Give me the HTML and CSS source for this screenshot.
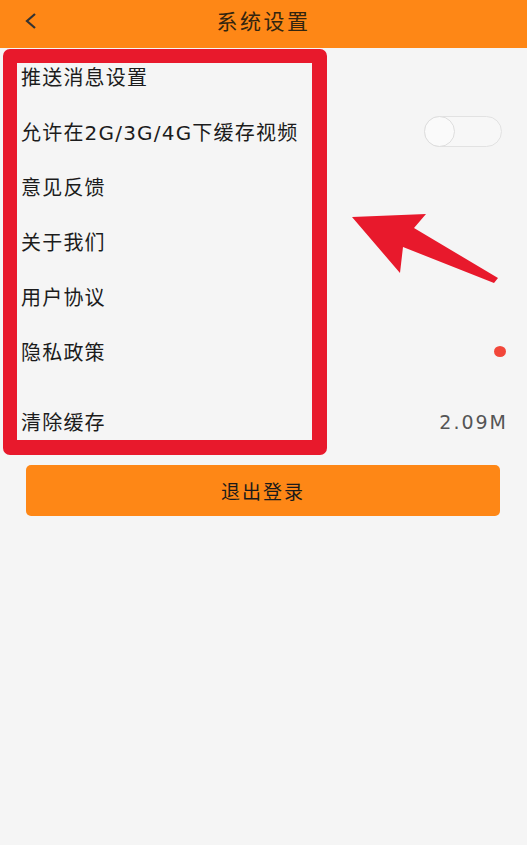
FILE: index.html
```html
<!DOCTYPE html>
<html lang="zh-CN">
<head>
    <meta charset="UTF-8">
    <title>系统设置</title>
    <link rel="stylesheet" href="styles.css">
</head>
<body>
<div class="page">
    <div class="header">
        <svg class="back" width="16" height="20" viewBox="0 0 16 20">
            <polyline points="12,3 4,10 12,17" fill="none" stroke="#333" stroke-width="2.2"/>
        </svg>
        <span class="title">系统设置</span>
    </div>

    <div class="list">
        <div class="row"><span class="label">推送消息设置</span></div>
        <div class="row">
            <span class="label">允许在2G/3G/4G下缓存视频</span>
            <span class="switch"><span class="knob"></span></span>
        </div>
        <div class="row"><span class="label">意见反馈</span></div>
        <div class="row"><span class="label">关于我们</span></div>
        <div class="row"><span class="label">用户协议</span></div>
        <div class="row">
            <span class="label">隐私政策</span>
            <span class="dot"></span>
        </div>
        <div class="row row-cache">
            <span class="label">清除缓存</span>
            <span class="size">2.09M</span>
        </div>
    </div>

    <div class="logout">退出登录</div>

    <!-- annotation drawn over the screenshot -->
    <div class="mark-box"></div>
    <svg class="mark-arrow" width="527" height="845" viewBox="0 0 527 845">
        <polygon points="352,217 426,214 414,228 498,278 494,283 403,247 400,273" fill="#e8192c"/>
    </svg>
</div>
</body>
</html>
```

FILE: styles.css
```css
*{
    margin: 0;
    padding: 0;
    box-sizing: border-box;
}

body{
    background-color: #f5f5f5;
    font-family: "DejaVu Sans", "Noto Sans CJK SC", sans-serif;
    color: #1c1c1c;
}

.page{
    position: relative;
    width: 527px;
    height: 845px;
    overflow: hidden;
}

.header{
    height: 48px;
    background-color: #fe8716;
    display: flex;
    align-items: center;
    justify-content: center;
    position: relative;
    padding-bottom: 8px;
}
.back{
    position: absolute;
    left: 23px;
    top: 11px;
}
.title{
    font-family: "Noto Sans CJK SC", sans-serif;
    font-size: 21px;
    color: #33250f;
    letter-spacing: 2.5px;
}

.list{
    padding-top: 1px;
}
.row{
    height: 55px;
    display: flex;
    align-items: center;
    justify-content: space-between;
    padding: 0 21px 0 21px;
}
.row-cache{
    margin-top: 15px;
}
.label{
    font-size: 20px;
    letter-spacing: 1.2px;
}

.switch{
    width: 78px;
    height: 31px;
    border: 1px solid #e2e2e2;
    border-radius: 16px;
    background-color: #f7f7f7;
    position: relative;
    margin-right: 4px;
}
.knob{
    position: absolute;
    left: -1px;
    top: -1px;
    width: 31px;
    height: 31px;
    border-radius: 50%;
    border: 1px solid #dedede;
    background-color: #fafafa;
}

.dot{
    width: 12px;
    height: 11px;
    border-radius: 50%;
    background-color: #f2473a;
}

.size{
    font-size: 19px;
    color: #555;
    letter-spacing: 2px;
    margin-right: -2px;
}

.logout{
    margin: 16px 27px 0 26px;
    height: 51px;
    border-radius: 5px;
    background-color: #fe8716;
    display: flex;
    align-items: center;
    justify-content: center;
    font-family: "Noto Sans CJK SC", sans-serif;
    font-size: 19px;
    letter-spacing: 2px;
    color: #1a1a1a;
}

.mark-box{
    position: absolute;
    left: 3px;
    top: 49px;
    width: 324px;
    height: 406px;
    border: 14px solid #e8192c;
    border-right-width: 15px;
    border-bottom-width: 15px;
    border-radius: 7px;
}
.mark-arrow{
    position: absolute;
    left: 0;
    top: 0;
}
```
